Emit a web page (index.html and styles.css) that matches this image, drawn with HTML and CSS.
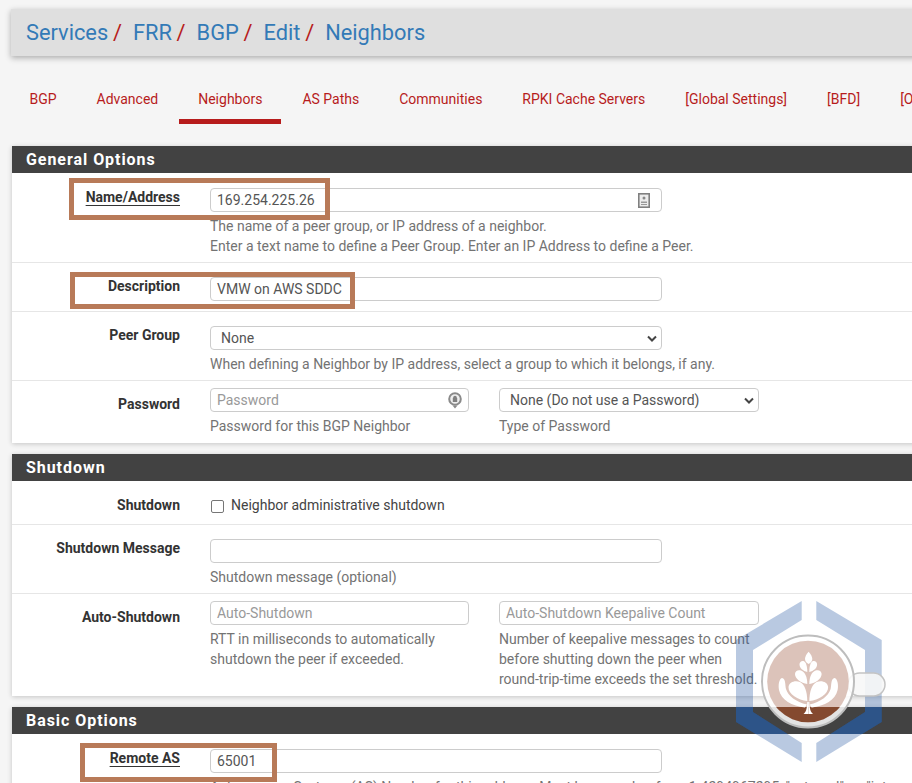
FILE: index.html
```html
<!DOCTYPE html>
<html lang="en">
<head>
<meta charset="utf-8">
<title>Services / FRR / BGP / Edit / Neighbors</title>
<link rel="stylesheet" href="styles.css">
</head>
<body>
<div class="page">
  <header class="crumbs">
    <a>Services</a><i>/</i><a>FRR</a><i>/</i><a>BGP</a><i>/</i><a>Edit</a><i>/</i><a>Neighbors</a>
  </header>
  <nav class="tabs">
    <a>BGP</a><a>Advanced</a><a class="active">Neighbors</a><a>AS Paths</a><a>Communities</a><a>RPKI Cache Servers</a><a>[Global Settings]</a><a>[BFD]</a><a>[OSPF]</a>
  </nav>

  <section class="panel">
    <h2>General Options</h2>
    <div class="row row-a">
      <label class="req">Name/Address</label>
      <div class="field">
        <div class="input">169.254.225.26
          <svg class="ico ico-addr" width="12" height="15" viewBox="0 0 12 15"><rect x="0.8" y="0.8" width="10.4" height="13.400" fill="#ececec" stroke="#808080" stroke-width="1.600"/><circle cx="6" cy="5" r="1.500" fill="#888"/><path d="M3 8.500h6V10H3zM3 11h6v1H3z" fill="#999"/></svg>
        </div>
        <p class="help">The name of a peer group, or IP address of a neighbor.<br>Enter a text name to define a Peer Group. Enter an IP Address to define a Peer.</p>
      </div>
    </div>
    <div class="row row-b">
      <label>Description</label>
      <div class="field"><div class="input">VMW on AWS SDDC</div></div>
    </div>
    <div class="row row-c">
      <label>Peer Group</label>
      <div class="field">
        <div class="input select">None<svg class="chev" width="10" height="7" viewBox="0 0 10 7"><path d="M1 1.500l4 4 4-4" fill="none" stroke="#444" stroke-width="2"/></svg></div>
        <p class="help">When defining a Neighbor by IP address, select a group to which it belongs, if any.</p>
      </div>
    </div>
    <div class="row row-d">
      <label>Password</label>
      <div class="field half">
        <div class="input ph">Password
          <svg class="ico ico-key" width="14" height="17" viewBox="0 0 14 17"><circle cx="7" cy="7" r="5.800" fill="#eee" stroke="#8a8a8a" stroke-width="2"/><circle cx="7" cy="5.500" r="1.800" fill="#808080"/><rect x="4.800" y="6" width="4.400" height="4" fill="#808080"/><path d="M4.500 13.500h5L7 16.500z" fill="#8a8a8a"/></svg>
        </div>
        <p class="help">Password for this BGP Neighbor</p>
      </div>
      <div class="field half wide">
        <div class="input select">None (Do not use a Password)<svg class="chev" width="10" height="7" viewBox="0 0 10 7"><path d="M1 1.500l4 4 4-4" fill="none" stroke="#444" stroke-width="2"/></svg></div>
        <p class="help">Type of Password</p>
      </div>
    </div>
  </section>

  <section class="panel">
    <h2>Shutdown</h2>
    <div class="row row-e">
      <label>Shutdown</label>
      <div class="field check"><span class="box"></span>Neighbor administrative shutdown</div>
    </div>
    <div class="row row-f">
      <label>Shutdown Message</label>
      <div class="field">
        <div class="input"></div>
        <p class="help">Shutdown message (optional)</p>
      </div>
    </div>
    <div class="row row-g">
      <label>Auto-Shutdown</label>
      <div class="field half">
        <div class="input ph">Auto-Shutdown</div>
        <p class="help">RTT in milliseconds to automatically<br>shutdown the peer if exceeded.</p>
      </div>
      <div class="field half wide">
        <div class="input ph">Auto-Shutdown Keepalive Count</div>
        <p class="help">Number of keepalive messages to count<br>before shutting down the peer when<br>round-trip-time exceeds the set threshold.</p>
      </div>
    </div>
  </section>

  <section class="panel">
    <h2>Basic Options</h2>
    <div class="row row-h">
      <label class="req">Remote AS</label>
      <div class="field">
        <div class="input">65001</div>
        <p class="help">Autonomous Systems (AS) Number for this address. Must be a number from 1-4294967295, "external", or "internal".</p>
      </div>
    </div>
  </section>
</div>

<div class="mark m1"></div>
<div class="mark m2"></div>
<div class="mark m3"></div>

<svg class="logo" width="150" height="162" viewBox="0 0 150 162" aria-hidden="true">
  <defs>
    <clipPath id="band"><rect x="0" y="106" width="150" height="27"/></clipPath>
    <clipPath id="below"><rect x="0" y="106" width="150" height="56"/></clipPath>
    <g id="half">
      <path d="M71.300 100C62 99 52 93 52.500 86C53 81 59 79 64 81C69 84 71 90 71.300 100Z"/>
      <path d="M71.300 83C65 82 59 78 59 73C59 70 62 68.500 65 69.500C69 71 71.300 76 71.300 83Z"/>
      <path d="M71.300 71C67 70 63.500 67 63.500 63.500C63.500 61 65.500 59.500 67.500 60C70 61 71.300 65 71.300 71Z"/>
      <path d="M46 77C43 78 42 84 43 89C45 99 56 105 69 106.500L71 103.500C60 101 52 95 50 88C49 84 50 78 46 77Z"/>
      <path d="M72.300 113H67.500C70 111 71 108 71.300 101H72.300Z"/>
    </g>
  </defs>
  <g class="hex">
    <path d="M65.700 0L0 39V121L65.700 161V142L17 111V49L65.700 19Z"/>
    <path d="M80.300 0L145.700 39V121L80.300 161V142L129 111V49L80.300 19Z"/>
  </g>
  <g class="hex-dark" clip-path="url(#band)">
    <path d="M65.700 0L0 39V121L65.700 161V142L17 111V49L65.700 19Z"/>
    <path d="M80.300 0L145.700 39V121L80.300 161V142L129 111V49L80.300 19Z"/>
  </g>
  <rect class="handle" x="112" y="72" width="37" height="23" rx="11.500"/>
  <circle class="rim" cx="72" cy="80.500" r="46"/>
  <circle class="crema" cx="72" cy="80.500" r="40.800"/>
  <circle class="crema-dark" cx="72" cy="80.500" r="40.800" clip-path="url(#below)"/>
  <g class="leaf">
    <path d="M72.600 50.700C70.500 53 69 55.500 69 58C69 60 70.500 62 72.600 63C74.700 62 76.300 60 76.300 58C76.300 55.500 74.700 53 72.600 50.700Z"/>
    <use href="#half"/>
    <use href="#half" transform="matrix(-1 0 0 1 144.600 0)"/>
  </g>
</svg>
</body>
</html>
```
FILE: styles.css
```css
* { box-sizing: border-box; }
html, body { margin: 0; height: 783px; overflow: hidden; }
body { background: #f5f5f5; font-family: Roboto, "Liberation Sans", sans-serif; font-size: 14px; color: #333; position: relative; width: 912px; }
.page { width: 1100px; padding: 9px 0 0 12px; }

.crumbs { height: 47px; margin-left: -1px; background: #dfdfdf; box-shadow: 0 2px 6px rgba(0,0,0,.3); font-size: 21.8px; line-height: 47px; padding-left: 15px; white-space: nowrap; color: #337ab7; }
.crumbs i { font-style: normal; color: #b71c1c; margin: 0 11px 0 4.75px; }

.tabs { display: flex; margin: 23px 0 0 -1.6px; height: 45px; white-space: nowrap; }
.tabs a { padding: 0 19px; margin-right: 2px; height: 45px; line-height: 40px; color: #b71c1c; font-size: 14px; }
.tabs a.active { border-bottom: 5px solid #b71c1c; }

.panel { background: #fff; margin-top: 22px; box-shadow: 0 1px 5px rgba(0,0,0,.2); }
.panel + .panel { margin-top: 11px; }
.panel h2 { margin: 0; height: 27px; line-height: 27px; background: #424242; color: #fff; font-size: 16px; font-weight: 700; letter-spacing: .95px; padding-left: 14px; }

.row { display: flex; border-bottom: 1px solid #e6e6e6; }
.row:last-child { border-bottom: 0; }
.row label { width: 168px; margin-right: 30px; text-align: right; font-weight: 700; font-size: 14px; color: #333; line-height: 20px; flex: none; height: 20px; }
.row label.req { text-decoration: underline; text-underline-offset: 3px; }

.field { width: 452px; flex: none; }
.field.half { width: 259px; margin-right: 30px; }
.field.half.wide { width: 260px; }
.input { position: relative; height: 24px; border: 1px solid #ccc; border-radius: 4px; background: #fff; padding-left: 6px; font-size: 14px; line-height: 22px; color: #555; }
.input.ph { color: #999; }
.input.select { padding-left: 10px; }
.ico { position: absolute; }
.ico-addr { right: 11px; top: 4px; }
.ico-key { right: 6px; top: 3px; }
.chev { position: absolute; right: 4px; top: 8px; }
.help { margin: 4px 0 0; font-size: 14px; line-height: 20px; color: #737373; white-space: nowrap; }

.row-a { height: 90px; padding-top: 15px; }
.row-a label { margin-top: -1px; }
.row-b { height: 49px; padding-top: 14px; }
.row-c { height: 69px; padding-top: 14px; }
.row-b label, .row-c label, .row-f label { margin-top: -1px; }
.row-d { height: 62px; padding-top: 7px; }
.row-d label { margin-top: 6px; }
.row-e { height: 44px; padding-top: 14px; }
.check { display: flex; align-items: center; height: 20px; color: #444; }
.box { width: 13px; height: 13px; border: 1px solid #767676; border-radius: 2px; background: #fff; margin: 2px 7px 0 1px; flex: none; }
.row-f { height: 69px; padding-top: 14px; }
.row-g { height: 102px; padding-top: 7px; }
.row-g label { margin-top: 6px; }
.row-h { padding-top: 15px; height: 60px; }
.row-h label { margin-top: -1px; }

.mark { position: absolute; border: 5px solid #b87a58; }
.m1 { left: 69px; top: 178px; width: 261px; height: 42px; }
.m2 { left: 70px; top: 272px; width: 285px; height: 37px; }
.m3 { left: 80px; top: 743px; width: 197px; height: 39px; }

.logo { position: absolute; left: 736px; top: 601px; }
.hex { fill: #2b5aa5; fill-opacity: .33; }
.hex-dark { fill: #2d5488; }
.handle { fill: #f7f7f7; fill-opacity: .9; stroke: #c4c4c4; stroke-width: 1.500px; }
.rim { fill: #fff; fill-opacity: .85; stroke: #bdbdbd; stroke-width: 2px; }
.crema { fill: #dcc3ba; }
.crema-dark { fill: #84492f; }
.leaf { fill: #fff; }
```
